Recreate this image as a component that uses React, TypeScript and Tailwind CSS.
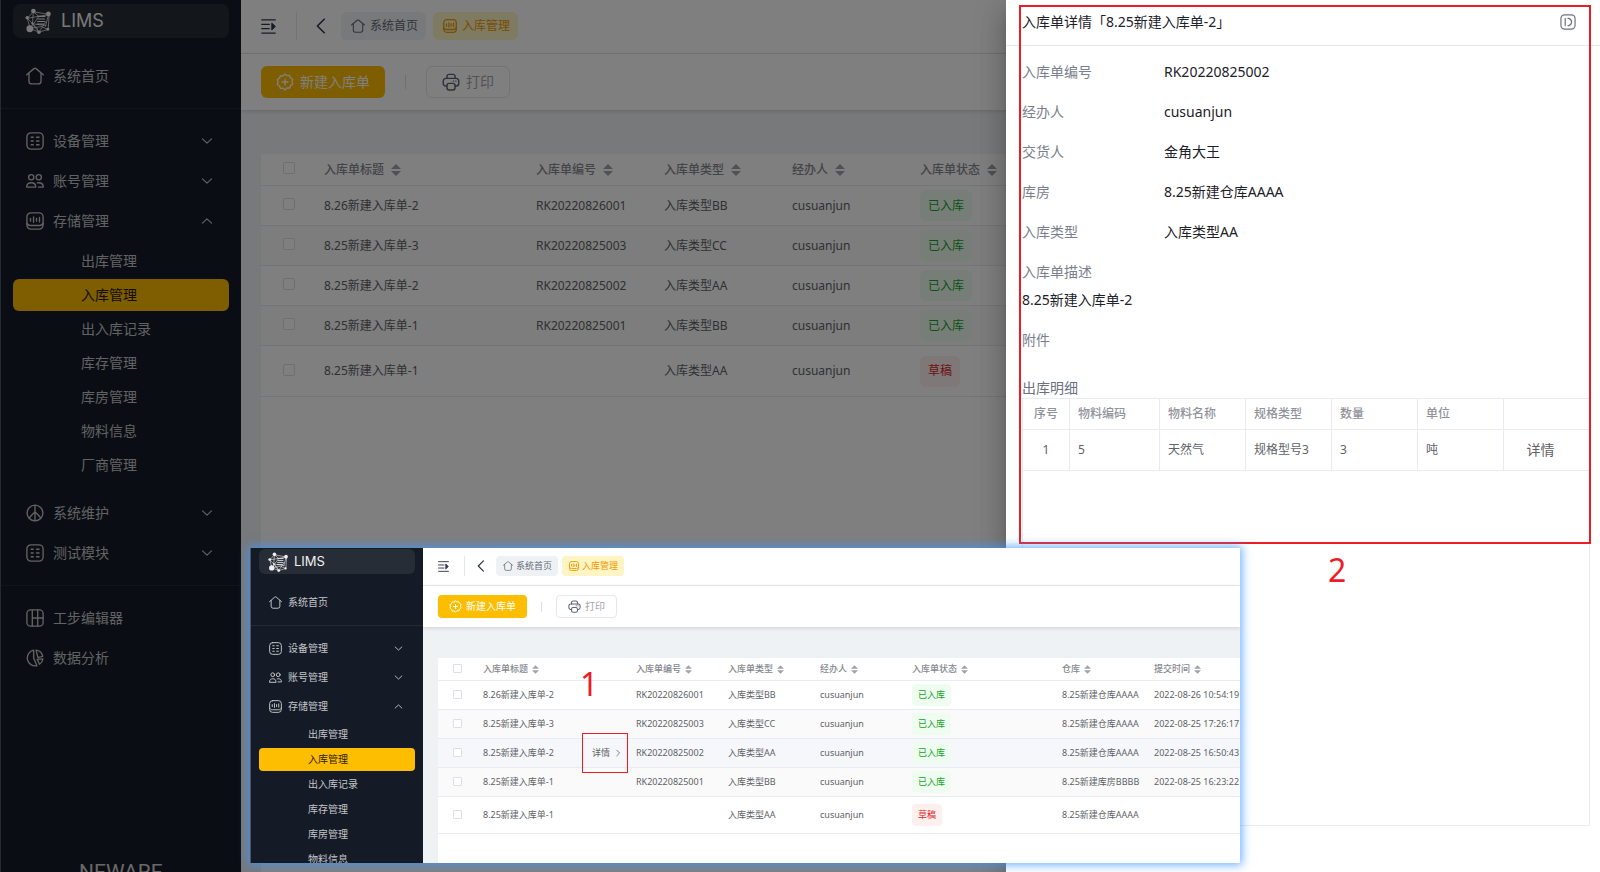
import type { ReactNode } from "react";

type Size = "lg" | "sm";

const S = {
  lg: {
    aside: "w-[241px]",
    logo: "mx-3 mt-1 h-[34px] gap-2.5 rounded-lg pl-3 text-lg",
    logoIcon: "size-[26px]",
    home: "mt-[18px] pb-3",
    group: "mt-3",
    item: "h-10 gap-[9px] pl-[25px] pr-7 text-sm",
    itemIcon: "size-[18px]",
    chevron: "size-3",
    subs: "pt-[3px] pb-[11px]",
    sub: "my-px h-8 mx-3 pl-[68px] rounded-md text-sm",
    groupEnd: "pb-3",
    topbar: "h-[54px] pl-5 pb-px",
    toggle: "size-[15px]",
    bar: "ml-5 mr-4 h-7",
    back: "w-4 h-5 mr-3",
    tab: "h-7 pl-2.5 pr-2 gap-[5px] rounded-md mr-[7px] text-xs",
    tabIcon: "size-[14px]",
    toolbar: "h-14 px-5",
    btn: "h-8 px-[15px] gap-1.5 rounded-md text-sm",
    btnIcon: "size-[18px]",
    btnBar: "mx-5 h-3.5",
    content: "pt-11 pl-5",
    table: "text-xs",
    head: "h-8",
    row: "h-10",
    rowTall: "h-[51px]",
    cell: "px-2.5",
    check: "size-3 rounded-xs",
    checkCell: "pl-[22px] pb-[3px]",
    cols: ["w-[53px]", "w-[212px]", "w-[128px]", "w-[128px]", "w-[128px]", ""],
    sort: "w-2.5 h-3 ml-[7px]",
    tag: "h-[31px] px-2 rounded-md",
  },
  sm: {
    aside: "w-[173px]",
    logo: "mx-2 mt-px h-[25px] gap-1.5 rounded-md pl-[9px] text-[13px]",
    logoIcon: "size-5",
    home: "mt-3.5 pb-2",
    group: "mt-2",
    item: "h-[29px] gap-1.5 pl-[18px] pr-5 text-[10px]",
    itemIcon: "size-[13px]",
    chevron: "size-[9px]",
    subs: "pt-px pb-2",
    sub: "my-px h-[23px] mx-2 pl-[49px] rounded text-[10px]",
    groupEnd: "pb-2",
    topbar: "h-[38px] pl-[15px] pb-px",
    toggle: "size-[11px]",
    bar: "ml-[15px] mr-2.5 h-5",
    back: "w-3 h-3.5 mr-[9px]",
    tab: "h-5 pl-[7px] pr-1.5 gap-[3px] rounded mr-1 text-[9px]",
    tabIcon: "size-[10px]",
    toolbar: "h-[41px] px-[15px]",
    btn: "h-[23px] px-[11px] gap-1 rounded text-[10px]",
    btnIcon: "size-[13px]",
    btnBar: "mx-3.5 h-2.5",
    content: "pt-[31px] pl-[15px]",
    table: "text-[9px]",
    head: "h-[23px]",
    row: "h-[29px]",
    rowTall: "h-[37px]",
    cell: "px-[7px]",
    check: "size-[9px] rounded-[1px]",
    checkCell: "pl-[15px] pb-0.5",
    cols: ["w-[38px]", "w-[153px]", "w-[92px]", "w-[92px]", "w-[92px]", "w-[150px]", "w-[92px]", ""],
    sort: "w-[7px] h-[9px] ml-1",
    tag: "h-[22px] px-1.5 rounded",
  },
};

function Svg({ className, children, w = 1.5 }: { className?: string; children: ReactNode; w?: number }) {
  return (
    <svg
      viewBox="0 0 20 20"
      className={`shrink-0 ${className ?? ""}`}
      fill="none"
      stroke="currentColor"
      strokeWidth={w}
      strokeLinecap="round"
      strokeLinejoin="round"
      aria-hidden="true"
    >
      {children}
    </svg>
  );
}

const glyphs = {
  home: (
    <>
      <path d="M.8 8.600 8.800 1.800a1.900 1.900 0 0 1 2.400 0l8 6.800" />
      <path d="M3.300 7v8.800a3 3 0 0 0 3 3h7.400a3 3 0 0 0 3-3V7" />
    </>
  ),
  device: (
    <>
      <rect x="1" y="1" width="18" height="18" rx="4.500" />
      <path d="M5.200 5.800h3.400M5.200 10h3.400M5.200 14.200h3.400M11.200 5.800h3.800M11.200 10h3.800M11.200 14.200h3.800" strokeWidth="1.700" strokeLinecap="butt" />
    </>
  ),
  users: (
    <>
      <circle cx="5.800" cy="5.800" r="2.900" />
      <circle cx="14.200" cy="5.800" r="2.900" />
      <path d="M.8 16.800c0-3.200 1.800-4.900 5-4.900s5 1.700 5 4.900ZM12.600 12.100c.5-.1 1-.2 1.600-.2 3.200 0 5 1.700 5 4.900h-5.400" />
    </>
  ),
  storage: (
    <>
      <rect x="1" y="1" width="18" height="18" rx="4.500" />
      <path d="M1.200 12.500c.4 1.700 1.900 2.500 3.800 2.500h10c1.900 0 3.400-.8 3.800-2.500M5 7v3.200M8.400 5.500v6M11.700 7v3.200M15 6v5" />
    </>
  ),
  wheel: (
    <>
      <circle cx="10" cy="10" r="8.800" />
      <path d="M10 1.500v7.500M8 10.500 3.500 15.500M12 10.500l4.500 5M10 9v9.500M8 10.500 10 9l2 1.500" />
    </>
  ),
  grid: (
    <>
      <rect x="1" y="1" width="18" height="18" rx="4" />
      <path d="M7 1v18M13 1v18M7 10h12" />
    </>
  ),
  pie: (
    <>
      <path d="M8.500 1.300a8.800 8.800 0 1 0 3.600 17.300L8.500 10Z" />
      <path d="M11.200 1.200a8.800 8.800 0 0 1 7.400 6.900l-5.400 1.400ZM18.800 11a8.500 8.500 0 0 1-3.800 6L12.500 11.500Z" />
    </>
  ),
  down: <path d="m2.500 6.500 7.500 7 7.500-7" />,
  up: <path d="m2.500 13.500 7.500-7 7.500 7" />,
  right: <path d="m7 3 7 7-7 7" />,
  back: <path d="m14 1.500-8.500 8.500L14 18.500" />,
  plus: (
    <>
      <path d="M10 1.200 12.300 2.900l2.900-.3.900 2.700 2.500 1.500-.8 2.800.8 2.800-2.500 1.600-.9 2.700-2.900-.2L10 18.800l-2.300-1.900-2.900.2-.9-2.700-2.500-1.600.8-2.800-.8-2.800 2.500-1.500.9-2.700 2.900.3Z" />
      <path d="M10 6.800v6.400M6.800 10h6.400" />
    </>
  ),
  print: (
    <>
      <path d="M5.500 6V3.700a2.200 2.200 0 0 1 2.200-2.200h4.600a2.200 2.200 0 0 1 2.200 2.200V6" />
      <path d="M5.500 14.500H4.200A2.800 2.800 0 0 1 1.400 11.700V8.800A2.800 2.800 0 0 1 4.200 6h11.600a2.800 2.800 0 0 1 2.800 2.800v2.900a2.800 2.800 0 0 1-2.800 2.800h-1.300M12.500 9h.3M15.300 9h.2" />
      <rect x="5.500" y="11.500" width="9" height="7.300" rx="2.400" />
    </>
  ),
  toggle: (
    <>
      <path d="M1 1.200h18M1 7.200h10M1 12.800h10M1 18.800h18" strokeWidth="1.700" />
      <path d="m14.500 5.800 4.200 4.200-4.200 4.200Z" fill="currentColor" />
    </>
  ),
  drawer: (
    <>
      <rect x="1.200" y="1.200" width="17.600" height="17.600" rx="4.500" />
      <path d="M6.500 5.500v9M10 5.500h1c2.500 1 3.500 2.500 3.500 4.500s-1 3.500-3.500 4.500h-1" />
    </>
  ),
};

function Logo({ className }: { className: string }) {
  return (
    <svg viewBox="0 0 28 28" className={`shrink-0 ${className}`} fill="none" stroke="currentColor" strokeWidth=".8" aria-hidden="true">
      <path d="M9 4 2.500 11 5.500 22 15 26l10-3 1-16L9 4ZM9 4l6 5 11-2M2.500 11 15 9M9 4 8 17l7 9 8-12M8 17l15 2M2.500 11 13 22l2 4M5.500 22 15 9M5.500 22l12-2 7 3M25.500 6.500 22 20" />
      <path d="M13.500 9h8.500M13.500 11.800h8M13 14.600h8.500M12.500 17.400h8" strokeWidth="1.200" />
      <g fill="currentColor" stroke="none">
        <circle cx="9" cy="3.200" r="2.500" />
        <circle cx="25.200" cy="6.500" r="2.600" />
        <circle cx="2.400" cy="10.500" r="1.900" />
        <circle cx="5.200" cy="22.300" r="3.700" />
        <circle cx="15" cy="26" r="1.900" />
        <circle cx="24.600" cy="23" r="1.600" />
        <circle cx="8" cy="16.500" r="1.200" />
      </g>
    </svg>
  );
}

function NavItem({ size, icon, label, arrow }: { size: Size; icon: ReactNode; label: string; arrow?: ReactNode }) {
  const s = S[size];
  return (
    <a href="#" className={`flex items-center ${s.item}`}>
      <Svg className={s.itemIcon}>{icon}</Svg>
      <span className="flex-1">{label}</span>
      {arrow && <Svg className={s.chevron} w={2}>{arrow}</Svg>}
    </a>
  );
}

const subItems = ["出库管理", "入库管理", "出入库记录", "库存管理", "库房管理", "物料信息", "厂商管理"];

function Sidebar({ size }: { size: Size }) {
  const s = S[size];
  return (
    <aside className={`flex shrink-0 flex-col overflow-hidden border-l border-[#4d535f] bg-[#151b26] text-[#c3c5c9] ${s.aside}`}>
      <div className={`flex shrink-0 items-center bg-[#272d36] font-['Inter','Liberation_Sans',sans-serif] text-[#f0f0f0] ${s.logo}`}>
        <Logo className={s.logoIcon} />
        <span>LIMS</span>
      </div>
      <nav className="shrink-0">
        <div className={`border-b border-[#232a34] ${s.home}`}>
          <NavItem size={size} icon={glyphs.home} label="系统首页" />
        </div>
        <div className={`border-b border-[#232a34] ${s.group} ${s.groupEnd}`}>
          <NavItem size={size} icon={glyphs.device} label="设备管理" arrow={glyphs.down} />
          <NavItem size={size} icon={glyphs.users} label="账号管理" arrow={glyphs.down} />
          <NavItem size={size} icon={glyphs.storage} label="存储管理" arrow={glyphs.up} />
          <ul className={s.subs}>
            {subItems.map((t) => (
              <li key={t} className="flow-root">
                <a
                  href="#"
                  className={`flex items-center ${s.sub} ${t === "入库管理" ? "bg-[#fdbd00] text-[#2a1a10]" : ""}`}
                >
                  {t}
                </a>
              </li>
            ))}
          </ul>
          <NavItem size={size} icon={glyphs.wheel} label="系统维护" arrow={glyphs.down} />
          <NavItem size={size} icon={glyphs.device} label="测试模块" arrow={glyphs.down} />
        </div>
        <div className={s.group}>
          <NavItem size={size} icon={glyphs.grid} label="工步编辑器" />
          <NavItem size={size} icon={glyphs.pie} label="数据分析" />
        </div>
      </nav>
      {size === "lg" && (
        <div className="mt-auto h-2.5 pl-[78px] font-[Roboto,sans-serif] text-[21px] leading-5 text-[#d0d0d0]">NEWARE</div>
      )}
    </aside>
  );
}

const headers = ["入库单标题", "入库单编号", "入库单类型", "经办人", "入库单状态", "仓库", "提交时间"];

const records = [
  ["8.26新建入库单-2", "RK20220826001", "入库类型BB", "cusuanjun", "已入库", "8.25新建仓库AAAA", "2022-08-26 10:54:19"],
  ["8.25新建入库单-3", "RK20220825003", "入库类型CC", "cusuanjun", "已入库", "8.25新建仓库AAAA", "2022-08-25 17:26:17"],
  ["8.25新建入库单-2", "RK20220825002", "入库类型AA", "cusuanjun", "已入库", "8.25新建仓库AAAA", "2022-08-25 16:50:43"],
  ["8.25新建入库单-1", "RK20220825001", "入库类型BB", "cusuanjun", "已入库", "8.25新建库房BBBB", "2022-08-25 16:23:22"],
  ["8.25新建入库单-1", "", "入库类型AA", "cusuanjun", "草稿", "8.25新建仓库AAAA", ""],
];

function Check({ size, label }: { size: Size; label: string }) {
  return (
    <input
      type="checkbox"
      aria-label={label}
      className={`block appearance-none border border-[#dcdfe6] bg-white ${S[size].check}`}
    />
  );
}

function RecordTable({ size, hovered }: { size: Size; hovered?: number }) {
  const s = S[size];
  const line = "border-b border-[#e8ebf3]";
  const shown = size === "lg" ? 5 : 7;
  return (
    <table className={`w-full table-fixed border-separate border-spacing-0 whitespace-nowrap text-left text-[#606266] ${s.table}`}>
      <colgroup>
        {s.cols.map((c, i) => (
          <col key={i} className={c} />
        ))}
      </colgroup>
      <thead>
        <tr className={`text-[#85888f] ${s.head}`}>
          <th className={`${line} ${s.checkCell}`}>
            <Check size={size} label="全选" />
          </th>
          {headers.slice(0, shown).map((h, i) => (
            <th key={h} colSpan={i === 6 ? 2 : 1} className={`font-medium ${line} ${s.cell}`}>
              <span className="flex items-center">
                {h}
                <svg viewBox="0 0 10 12" className={s.sort} fill="#a0a3aa" aria-hidden="true">
                  <path d="M5 0 10 5H0ZM5 12 0 7h10Z" />
                </svg>
              </span>
            </th>
          ))}
        </tr>
      </thead>
      <tbody>
        {records.map((r, n) => (
          <tr
            key={n}
            className={`${n === 4 ? s.rowTall : s.row} ${n === hovered ? "bg-[#f5f7fb]" : n % 2 ? "bg-[#fafafa]" : "bg-white"}`}
          >
            <td className={`${line} ${s.checkCell}`}>
              <Check size={size} label={r[0]} />
            </td>
            {r.slice(0, shown).map((v, i) => (
              <td key={i} colSpan={i === 6 ? 2 : 1} className={`${line} ${s.cell}`}>
                {i === 4 ? (
                  <span
                    className={`inline-flex items-center align-middle ${s.tag} ${
                      v === "草稿" ? "bg-[#fff0f0] text-[#dc2626]" : "bg-[#effdf1] text-[#16a329]"
                    }`}
                  >
                    {v}
                  </span>
                ) : i === 0 && n === hovered ? (
                  <span className="flex items-center justify-between">
                    {v}
                    <button type="button" className="flex items-center gap-1">
                      详情
                      <Svg className="size-2" w={2}>{glyphs.right}</Svg>
                    </button>
                  </span>
                ) : (
                  v
                )}
              </td>
            ))}
          </tr>
        ))}
      </tbody>
    </table>
  );
}

function Page({ size, hovered }: { size: Size; hovered?: number }) {
  const s = S[size];
  return (
    <div className="flex h-full">
      <Sidebar size={size} />
      <div className="flex min-w-0 flex-1 flex-col bg-[#eef2f5]">
        <header className={`flex shrink-0 items-center border-b border-[#e8eaed] bg-white text-[#2f3747] ${s.topbar}`}>
          <button type="button" aria-label="折叠菜单">
            <Svg className={s.toggle}>{glyphs.toggle}</Svg>
          </button>
          <span className={`w-px bg-[#e4e7ed] ${s.bar}`} />
          <button type="button" aria-label="返回">
            <Svg className={s.back} w={2}>{glyphs.back}</Svg>
          </button>
          <a href="#" className={`flex items-center bg-[#eef2f5] text-[#626a76] ${s.tab}`}>
            <Svg className={s.tabIcon}>{glyphs.home}</Svg>
            系统首页
          </a>
          <a href="#" className={`flex items-center bg-[#fff4c4] text-[#f09a00] ${s.tab}`}>
            <Svg className={s.tabIcon} w={1.8}>{glyphs.storage}</Svg>
            入库管理
          </a>
        </header>
        <div className={`relative flex shrink-0 items-center bg-white shadow-[0_1px_4px_rgba(0,0,0,0.15)] ${s.toolbar}`}>
          <button type="button" className={`flex items-center bg-[#fdbd00] text-white ${s.btn}`}>
            <Svg className={s.btnIcon}>{glyphs.plus}</Svg>
            新建入库单
          </button>
          <span className={`w-px bg-[#dcdfe6] ${s.btnBar}`} />
          <button type="button" className={`flex items-center border border-[#e4e7ed] bg-white text-[#a3a6ad] ${s.btn}`}>
            <Svg className={`text-[#5d6470] ${s.btnIcon}`} w={1.6}>{glyphs.print}</Svg>
            打印
          </button>
        </div>
        <main className={`flex min-h-0 flex-1 flex-col ${s.content}`}>
          <div className="min-h-0 flex-1 overflow-hidden bg-white">
            <RecordTable size={size} hovered={hovered} />
          </div>
        </main>
      </div>
    </div>
  );
}

const fields = [
  ["入库单编号", "RK20220825002"],
  ["经办人", "cusuanjun"],
  ["交货人", "金角大王"],
  ["库房", "8.25新建仓库AAAA"],
  ["入库类型", "入库类型AA"],
];

const detailHeads = ["序号", "物料编码", "物料名称", "规格类型", "数量", "单位", ""];
const detailCells = ["1", "5", "天然气", "规格型号3", "3", "吨", "详情"];
const detailCols = ["w-[47px]", "w-[90px]", "w-[86px]", "w-[86px]", "w-[86px]", "w-[86px]", ""];

function Drawer() {
  return (
    <section className="absolute inset-y-0 right-0 flex w-[594px] flex-col bg-white text-sm text-[#1d2129] shadow-[0_8px_10px_-5px_rgba(0,0,0,0.2),0_16px_24px_2px_rgba(0,0,0,0.14),0_6px_30px_5px_rgba(0,0,0,0.12)]">
      <header className="flex h-[46px] shrink-0 items-center justify-between border-b border-[#e5e7eb] pr-6 pb-0.5 pl-4">
        <h2>入库单详情「8.25新建入库单-2」</h2>
        <button type="button" aria-label="收起" className="text-[#6b7280]">
          <Svg className="size-4">{glyphs.drawer}</Svg>
        </button>
      </header>
      <div className="flex flex-1 flex-col pt-1.5 pr-2.5 pl-4">
        <dl>
          {fields.map(([k, v]) => (
            <div key={k} className="flex h-10 items-center">
              <dt className="w-[142px] text-[#7a7f8c]">{k}</dt>
              <dd>{v}</dd>
            </div>
          ))}
          <div>
            <dt className="flex h-10 items-center text-[#7a7f8c]">入库单描述</dt>
            <dd className="mb-3 leading-4">8.25新建入库单-2</dd>
          </div>
          <div>
            <dt className="flex h-10 items-center text-[#7a7f8c]">附件</dt>
          </div>
        </dl>
        <h3 className="mt-[18px] leading-5 text-[#6b7080]">出库明细</h3>
        <div className="mb-[46px] flex-1 border border-[#e8ebf3]">
          <table className="w-full table-fixed border-separate border-spacing-0 text-left text-xs text-[#606266]">
            <colgroup>
              {detailCols.map((c, i) => (
                <col key={i} className={c} />
              ))}
            </colgroup>
            <thead>
              <tr className="h-[31px] text-[#909399]">
                {detailHeads.map((h, i) => (
                  <th
                    key={i}
                    className={`border-b border-[#e8ebf3] px-2 font-medium ${i < 6 ? "border-r" : ""} ${i === 0 ? "text-center" : ""}`}
                  >
                    {h}
                  </th>
                ))}
              </tr>
            </thead>
            <tbody>
              <tr className="h-[41px]">
                {detailCells.map((c, i) => (
                  <td
                    key={i}
                    className={`border-b border-[#e8ebf3] px-2 ${i < 6 ? "border-r" : "text-center text-sm"} ${i === 0 ? "text-center" : ""}`}
                  >
                    {i === 6 ? <button type="button" className="pr-3">{c}</button> : c}
                  </td>
                ))}
              </tr>
            </tbody>
          </table>
        </div>
      </div>
    </section>
  );
}

export default function App() {
  return (
    <div className="relative h-screen overflow-hidden font-['Noto_Sans','Noto_Sans_CJK_SC',sans-serif]">
      <Page size="lg" />
      <div className="absolute inset-0 bg-black/50" />
      <Drawer />

      <div className="absolute top-[5px] right-[9px] h-[539px] w-[572px] border-2 border-[#ed1c24]" />
      <div className="absolute top-[548px] left-[250px] h-[315px] w-[990px] overflow-hidden shadow-[0_0_9px_2px_rgba(64,150,255,0.75)]">
        <Page size="sm" hovered={2} />
      </div>
      <div className="absolute top-[733px] left-[582px] h-10 w-[46px] border border-[#ed1c24]" />
      <span className="absolute top-[668px] left-[580px] text-[32px] leading-8 text-[#ed1c24]">1</span>
      <span className="absolute top-[554px] left-[1328px] text-[32px] leading-8 text-[#ed1c24]">2</span>
    </div>
  );
}
